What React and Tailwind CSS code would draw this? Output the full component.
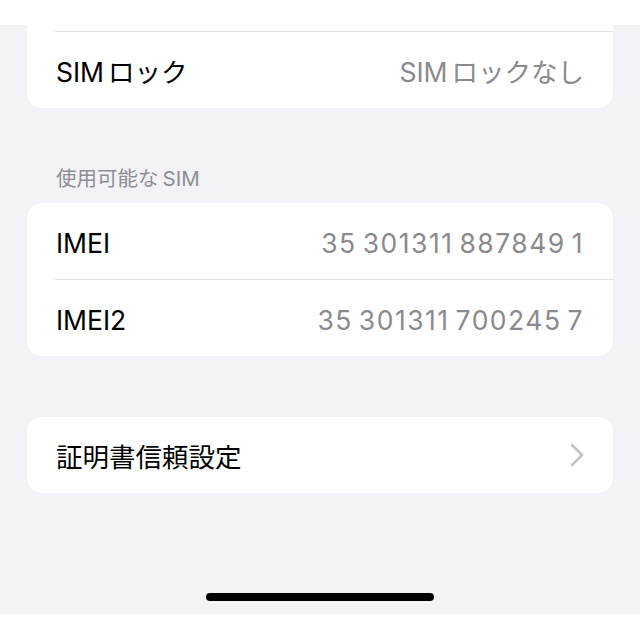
import React from "react";

const font = { fontFamily: '"Inter", "Noto Sans CJK JP", sans-serif' };

function Chevron() {
  return (
    <svg width="14" height="24" viewBox="0 0 14 24" fill="none">
      <path
        d="M2 2 L12 12 L2 22"
        stroke="#c4c4c7"
        strokeWidth="2.6"
        strokeLinecap="round"
        strokeLinejoin="round"
      />
    </svg>
  );
}

function Row({ label, value, chevron, mono }) {
  return (
    <div className="flex h-[76px] items-center justify-between pl-[29px] pr-[29px]">
      <span className="text-[26.5px] leading-[32px] text-black pt-[3px]">{label}</span>
      {value && (
        <span
          className={
            mono
              ? "text-[26.5px] leading-[32px] tracking-[1.5px] [word-spacing:-3px] text-[#8a8a8e] pt-[3px]"
              : "text-[26.5px] leading-[32px] text-[#8a8a8e] pt-[3px]"
          }
        >
          {value}
        </span>
      )}
      {chevron && <Chevron />}
    </div>
  );
}

function Separator() {
  return <div className="ml-[28px] h-px bg-[#e3e3e6]" />;
}

export default function App() {
  return (
    <div className="flex h-[640px] w-[640px] flex-col bg-[#f2f2f7]" style={font}>
      {/* nav bar strip */}
      <div className="h-[25px] w-full bg-white" />

      {/* SIM lock card, its top row scrolled under the bar */}
      <div className="mx-[27px] rounded-b-[15px] bg-white">
        <div className="h-[6px]" />
        <Separator />
        <Row
          label={
            <>
              SIM<span className="ml-[4px]">ロック</span>
            </>
          }
          value={
            <>
              SIM<span className="ml-[4px]">ロックなし</span>
            </>
          }
        />
      </div>

      {/* section header */}
      <div className="mt-[59px] mb-[12px] pl-[56px] text-[20.5px] leading-[24px] text-[#8e8e93]">
        使用可能な<span className="ml-[4px]">SIM</span>
      </div>

      <div className="mx-[27px] overflow-hidden rounded-[15px] bg-white">
        <Row label="IMEI" value="35 301311 887849 1" mono />
        <Separator />
        <Row label="IMEI2" value="35 301311 700245 7" mono />
      </div>

      <div className="mx-[27px] mt-[61px] rounded-[15px] bg-white">
        <Row label="証明書信頼設定" chevron />
      </div>

      {/* home indicator */}
      <div className="mt-[100px] flex justify-center">
        <div className="h-[8px] w-[228px] rounded-full bg-black" />
      </div>
      <div className="h-[13px]" />
      <div className="flex-1 bg-white" />
    </div>
  );
}
